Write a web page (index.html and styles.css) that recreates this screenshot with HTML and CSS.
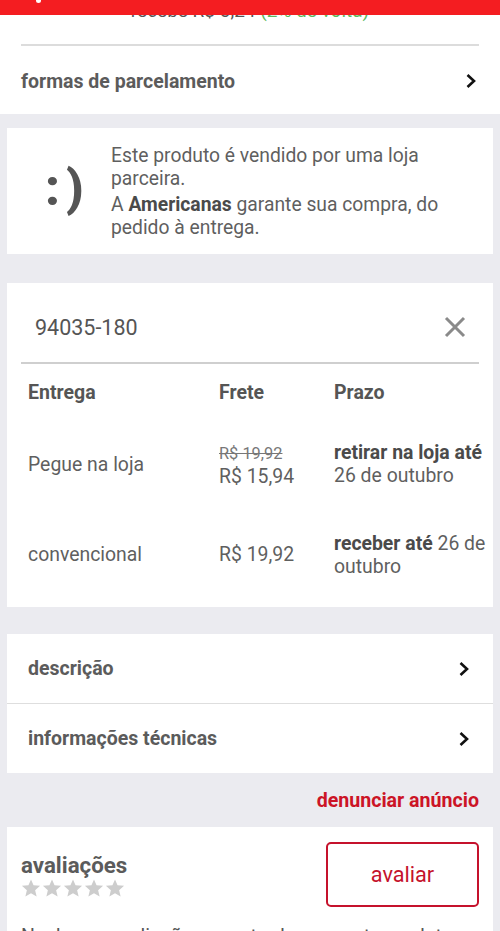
FILE: index.html
```html
<!DOCTYPE html>
<html lang="pt-BR">
<head>
    <meta charset="UTF-8">
    <meta name="viewport" content="width=device-width, initial-scale=1.0">
    <title>Produto</title>
    <link rel="stylesheet" href="styles.css">
</head>
<body>
    <div class="topbar"><span class="topbar-dot"></span></div>

    <div class="price-card">
        <p class="cashback">recebe R$ 0,24 <span class="cashback-green">(2% de volta)</span></p>
        <div class="price-divider"></div>
        <div class="link-row link-row-wide">
            <span>formas de parcelamento</span>
            <svg class="chevron" width="12" height="16" viewBox="0 0 12 16"><path d="M2.5 2 L9 8 L2.5 14" fill="none" stroke="#111" stroke-width="2.6"/></svg>
        </div>
    </div>

    <div class="card seller-card">
        <div class="smile">:)</div>
        <div class="seller-text">
            <p>Este produto é vendido por uma loja parceira.</p>
            <p>A <strong>Americanas</strong> garante sua compra, do pedido à entrega.</p>
        </div>
    </div>

    <div class="card shipping-card">
        <div class="cep-row">
            <span class="cep">94035-180</span>
            <svg class="close" width="24" height="24" viewBox="0 0 24 24"><path d="M3 3 L21 21 M21 3 L3 21" stroke="#8a8a8a" stroke-width="3"/></svg>
        </div>
        <div class="cep-divider"></div>
        <table class="shipping-table">
            <thead>
                <tr>
                    <th class="col-type">Entrega</th>
                    <th class="col-price">Frete</th>
                    <th>Prazo</th>
                </tr>
            </thead>
            <tbody>
                <tr>
                    <td>Pegue na loja</td>
                    <td><span class="old-price">R$ 19,92</span><br>R$ 15,94</td>
                    <td><strong>retirar na loja até</strong><br>26 de outubro</td>
                </tr>
                <tr>
                    <td>convencional</td>
                    <td>R$ 19,92</td>
                    <td><strong>receber até</strong> 26 de outubro</td>
                </tr>
            </tbody>
        </table>
    </div>

    <div class="card links-card">
        <div class="link-row">
            <span>descrição</span>
            <svg class="chevron" width="12" height="16" viewBox="0 0 12 16"><path d="M2.5 2 L9 8 L2.5 14" fill="none" stroke="#111" stroke-width="2.6"/></svg>
        </div>
        <div class="link-row">
            <span>informações técnicas</span>
            <svg class="chevron" width="12" height="16" viewBox="0 0 12 16"><path d="M2.5 2 L9 8 L2.5 14" fill="none" stroke="#111" stroke-width="2.6"/></svg>
        </div>
    </div>

    <div class="report"><a href="#">denunciar anúncio</a></div>

    <div class="card reviews-card">
        <div class="reviews-head">
            <div>
                <h2>avaliações</h2>
                <div class="stars">
                    <svg width="20" height="19" viewBox="0 0 24 23"><path d="M12 0.5 L15.1 7.6 L23 8.3 L17 13.5 L18.8 21.3 L12 17.2 L5.2 21.3 L7 13.5 L1 8.3 L8.9 7.6 Z" fill="#cdcdcd"/></svg>
                    <svg width="20" height="19" viewBox="0 0 24 23"><path d="M12 0.5 L15.1 7.6 L23 8.3 L17 13.5 L18.8 21.3 L12 17.2 L5.2 21.3 L7 13.5 L1 8.3 L8.9 7.6 Z" fill="#cdcdcd"/></svg>
                    <svg width="20" height="19" viewBox="0 0 24 23"><path d="M12 0.5 L15.1 7.6 L23 8.3 L17 13.5 L18.8 21.3 L12 17.2 L5.2 21.3 L7 13.5 L1 8.3 L8.9 7.6 Z" fill="#cdcdcd"/></svg>
                    <svg width="20" height="19" viewBox="0 0 24 23"><path d="M12 0.5 L15.1 7.6 L23 8.3 L17 13.5 L18.8 21.3 L12 17.2 L5.2 21.3 L7 13.5 L1 8.3 L8.9 7.6 Z" fill="#cdcdcd"/></svg>
                    <svg width="20" height="19" viewBox="0 0 24 23"><path d="M12 0.5 L15.1 7.6 L23 8.3 L17 13.5 L18.8 21.3 L12 17.2 L5.2 21.3 L7 13.5 L1 8.3 L8.9 7.6 Z" fill="#cdcdcd"/></svg>
                </div>
            </div>
            <button class="rate-btn">avaliar</button>
        </div>
        <p class="no-reviews">Nenhuma avaliação encontrada para este produto</p>
    </div>
</body>
</html>
```

FILE: styles.css
```css
body {
    margin: 0;
    font-family: Roboto, "Noto Sans", Arial, sans-serif;
    background-color: #ebebf0;
    color: #555;
}

p {
    margin: 0;
}

.topbar {
    position: fixed;
    top: 0;
    left: 0;
    right: 0;
    height: 15px;
    background-color: #f41d21;
    z-index: 2;
}

.topbar-dot {
    position: absolute;
    left: 36px;
    top: -2px;
    width: 5px;
    height: 5px;
    border-radius: 50%;
    background-color: white;
}

.price-card {
    background-color: white;
    height: 114px;
}

.cashback {
    text-align: center;
    font-size: 19px;
    line-height: 22px;
    color: #555;
    white-space: nowrap;
}

.cashback-green {
    color: #5cb85c;
}

.price-divider {
    height: 2px;
    background-color: #dcdcdc;
    margin: 22px 21px 0;
}

.link-row {
    display: flex;
    justify-content: space-between;
    align-items: center;
    height: 69px;
    padding: 0 23px 0 21px;
    font-size: 19.5px;
    font-weight: bold;
    color: #5b5b5b;
}

.link-row-wide {
    height: 70px;
}

.card {
    background-color: white;
    margin: 0 7px;
}

.seller-card {
    margin-top: 14px;
    height: 126px;
    display: flex;
    align-items: center;
}

.smile {
    width: 104px;
    flex-shrink: 0;
    padding-left: 38px;
    box-sizing: border-box;
    font-size: 50px;
    font-weight: 900;
    color: #555;
    letter-spacing: 6px;
    padding-bottom: 6px;
}

.seller-text {
    font-size: 19.3px;
    line-height: 23px;
    color: #5f5f5f;
    padding-right: 36px;
}

.seller-text p + p {
    margin-top: 3px;
}

.seller-text strong {
    color: #4a4a4a;
}

.shipping-card {
    margin-top: 29px;
    height: 324px;
    padding: 0 14px;
}

.cep-row {
    display: flex;
    justify-content: space-between;
    align-items: center;
    height: 70px;
    padding: 9px 12px 0 14px;
}

.cep {
    font-size: 21.5px;
    color: #555;
}

.cep-divider {
    height: 2px;
    background-color: #cfcfcf;
}

.shipping-table {
    width: calc(100% + 14px);
    margin-right: -14px;
    border-collapse: collapse;
    font-size: 19.4px;
    color: #5f5f5f;
}

.shipping-table th {
    text-align: left;
    font-weight: bold;
    font-size: 19.5px;
    color: #555;
    height: 56px;
    padding: 0 0 0 7px;
}

.shipping-table td {
    padding: 0 0 0 7px;
    height: 93px;
    line-height: 23px;
    vertical-align: middle;
}

.shipping-table tbody tr:first-child td {
    height: 88px;
}

.col-type {
    width: 184px;
}

.col-price {
    width: 108px;
}

.shipping-table strong {
    color: #4a4a4a;
    white-space: nowrap;
}

.old-price {
    font-size: 16.4px;
    text-decoration: line-through;
    color: #777;
}

.links-card {
    margin-top: 27px;
}

.links-card .link-row + .link-row {
    border-top: 1px solid #dedede;
}

.report {
    text-align: right;
    padding: 0 21px;
    height: 54px;
    line-height: 56px;
}

.report a {
    color: #cc1426;
    font-weight: bold;
    font-size: 19.6px;
    text-decoration: none;
}

.reviews-card {
    padding: 15px 14px 20px;
}

.reviews-head {
    display: flex;
    justify-content: space-between;
    align-items: flex-start;
}

.reviews-head h2 {
    margin: 10px 0 0;
    font-size: 22.3px;
    color: #5b5b5b;
    line-height: 26px;
}

.stars {
    display: flex;
    gap: 1px;
    margin-top: 1px;
}

.rate-btn {
    width: 153px;
    height: 65px;
    background-color: white;
    border: 2px solid #c5122c;
    border-radius: 5px;
    color: #c5122c;
    font-family: Roboto, Arial, sans-serif;
    font-size: 21.7px;
}

.no-reviews {
    margin-top: 18px;
    font-size: 19.5px;
    color: #555;
    white-space: nowrap;
}
```
